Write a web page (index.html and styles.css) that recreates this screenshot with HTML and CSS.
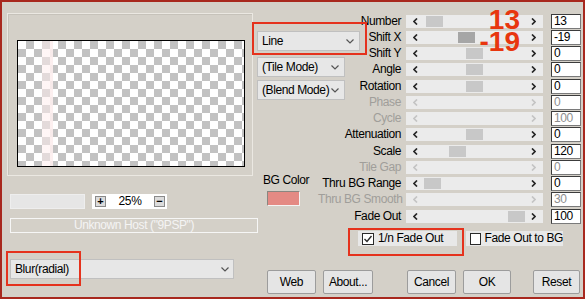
FILE: index.html
```html
<!DOCTYPE html>
<html lang="en">
<head>
  <meta charset="UTF-8">
  <title>Filter Dialog</title>
  <link rel="stylesheet" href="styles.css">
</head>
<body>
  <div class="window">
    <div class="left">
      <div class="group">
        <div class="preview"><div class="streak"></div></div>
      </div>
      <div class="zoom-row">
        <div class="zoom-field"></div>
        <div class="zoom-box">
          <span class="zbtn">+</span>
          <span class="zval">25%</span>
          <span class="zbtn">&minus;</span>
        </div>
      </div>
      <div class="host">Unknown Host ("9PSP")</div>
      <div class="select blur">Blur(radial)<svg class="chev" viewBox="0 0 8 5"><path d="M.5 .5 4 4 7.5 .5"/></svg></div>
    </div>

    <div class="right">
      <div class="top">
        <div class="mid">
          <div class="select line">Line<svg class="chev" viewBox="0 0 8 5"><path d="M.5 .5 4 4 7.5 .5"/></svg></div>
          <div class="select tile">(Tile Mode)<svg class="chev" viewBox="0 0 8 5"><path d="M.5 .5 4 4 7.5 .5"/></svg></div>
          <div class="select blend">(Blend Mode)<svg class="chev" viewBox="0 0 8 5"><path d="M.5 .5 4 4 7.5 .5"/></svg></div>
          <div class="bgcolor">
            <span>BG Color</span>
            <div class="swatch"></div>
          </div>
        </div>

        <div class="sliders">
          <span class="lbl">Number</span>
          <div class="track"><svg class="arr" viewBox="0 0 5 7"><path d="M4 .5 1 3.5 4 6.5"/></svg><b class="thumb" style="left:20px"></b><svg class="arr" viewBox="0 0 5 7"><path d="M1 .5 4 3.5 1 6.5"/></svg></div>
          <span class="val">13</span>

          <span class="lbl">Shift X</span>
          <div class="track"><svg class="arr" viewBox="0 0 5 7"><path d="M4 .5 1 3.5 4 6.5"/></svg><b class="thumb focus" style="left:52px"></b><svg class="arr" viewBox="0 0 5 7"><path d="M1 .5 4 3.5 1 6.5"/></svg></div>
          <span class="val">-19</span>

          <span class="lbl">Shift Y</span>
          <div class="track"><svg class="arr" viewBox="0 0 5 7"><path d="M4 .5 1 3.5 4 6.5"/></svg><b class="thumb" style="left:60px"></b><svg class="arr" viewBox="0 0 5 7"><path d="M1 .5 4 3.5 1 6.5"/></svg></div>
          <span class="val">0</span>

          <span class="lbl">Angle</span>
          <div class="track"><svg class="arr" viewBox="0 0 5 7"><path d="M4 .5 1 3.5 4 6.5"/></svg><b class="thumb" style="left:60px"></b><svg class="arr" viewBox="0 0 5 7"><path d="M1 .5 4 3.5 1 6.5"/></svg></div>
          <span class="val">0</span>

          <span class="lbl">Rotation</span>
          <div class="track"><svg class="arr" viewBox="0 0 5 7"><path d="M4 .5 1 3.5 4 6.5"/></svg><b class="thumb" style="left:60px"></b><svg class="arr" viewBox="0 0 5 7"><path d="M1 .5 4 3.5 1 6.5"/></svg></div>
          <span class="val">0</span>

          <span class="lbl off">Phase</span>
          <div class="track off"><svg class="arr" viewBox="0 0 5 7"><path d="M4 .5 1 3.5 4 6.5"/></svg><svg class="arr" viewBox="0 0 5 7"><path d="M1 .5 4 3.5 1 6.5"/></svg></div>
          <span class="val off">0</span>

          <span class="lbl off">Cycle</span>
          <div class="track off"><svg class="arr" viewBox="0 0 5 7"><path d="M4 .5 1 3.5 4 6.5"/></svg><svg class="arr" viewBox="0 0 5 7"><path d="M1 .5 4 3.5 1 6.5"/></svg></div>
          <span class="val off">100</span>

          <span class="lbl">Attenuation</span>
          <div class="track"><svg class="arr" viewBox="0 0 5 7"><path d="M4 .5 1 3.5 4 6.5"/></svg><b class="thumb" style="left:60px"></b><svg class="arr" viewBox="0 0 5 7"><path d="M1 .5 4 3.5 1 6.5"/></svg></div>
          <span class="val">0</span>

          <span class="lbl">Scale</span>
          <div class="track"><svg class="arr" viewBox="0 0 5 7"><path d="M4 .5 1 3.5 4 6.5"/></svg><b class="thumb" style="left:43px"></b><svg class="arr" viewBox="0 0 5 7"><path d="M1 .5 4 3.5 1 6.5"/></svg></div>
          <span class="val">120</span>

          <span class="lbl off">Tile Gap</span>
          <div class="track off"><svg class="arr" viewBox="0 0 5 7"><path d="M4 .5 1 3.5 4 6.5"/></svg><svg class="arr" viewBox="0 0 5 7"><path d="M1 .5 4 3.5 1 6.5"/></svg></div>
          <span class="val off">0</span>

          <span class="lbl">Thru BG Range</span>
          <div class="track"><svg class="arr" viewBox="0 0 5 7"><path d="M4 .5 1 3.5 4 6.5"/></svg><b class="thumb" style="left:18px"></b><svg class="arr" viewBox="0 0 5 7"><path d="M1 .5 4 3.5 1 6.5"/></svg></div>
          <span class="val">0</span>

          <span class="lbl off">Thru BG Smooth</span>
          <div class="track off"><svg class="arr" viewBox="0 0 5 7"><path d="M4 .5 1 3.5 4 6.5"/></svg><svg class="arr" viewBox="0 0 5 7"><path d="M1 .5 4 3.5 1 6.5"/></svg></div>
          <span class="val off">30</span>

          <span class="lbl">Fade Out</span>
          <div class="track"><svg class="arr" viewBox="0 0 5 7"><path d="M4 .5 1 3.5 4 6.5"/></svg><b class="thumb" style="left:102px"></b><svg class="arr" viewBox="0 0 5 7"><path d="M1 .5 4 3.5 1 6.5"/></svg></div>
          <span class="val">100</span>
        </div>
      </div>

      <div class="checks">
        <label class="check first"><span class="box"><svg viewBox="0 0 10 10"><path d="M1.5 5 4 7.5 8.5 2"/></svg></span>1/n Fade Out</label>
        <label class="check second"><span class="box"></span>Fade Out to BG</label>
      </div>

      <div class="buttons">
        <button class="web">Web</button>
        <button class="about">About...</button>
        <button class="cancel">Cancel</button>
        <button class="ok">OK</button>
        <button class="reset">Reset</button>
      </div>
    </div>

    <!-- annotation marks drawn over the dialog -->
    <div class="mark mark-line"></div>
    <div class="mark mark-blur"></div>
    <div class="mark mark-fade"></div>
    <div class="note">13<br>-19</div>
  </div>
</body>
</html>
```

FILE: styles.css
```css
body {
  margin: 0;
  font-family: "Liberation Sans", sans-serif;
  font-size: 12px;
  letter-spacing: -0.4px;
  color: #000;
}

.window {
  position: relative;
  display: flex;
  width: 585px;
  height: 299px;
  box-sizing: border-box;
  border: 2px solid #a8281e;
  background: #d4d0c8;
}

/* left side: preview and filter choice */
.left {
  width: 255px;
  flex-shrink: 0;
  display: flex;
  flex-direction: column;
}

.group {
  margin: 11px 4px 0 5px;
  height: 163px;
  box-sizing: border-box;
  padding: 26px 0 0 9px;
  border: 1px solid #ebe8e2;
  box-shadow: inset 1px 1px 0 #c6c2ba;
}

.preview {
  position: relative;
  width: 228px;
  height: 127px;
  box-sizing: border-box;
  border: 1px solid #000;
  background: repeating-conic-gradient(#c2c2c2 0 25%, #fff 0 50%) 0 0 / 16px 16px;
}

.streak {
  position: absolute;
  top: 0;
  bottom: 0;
  left: 24px;
  width: 11px;
  background: linear-gradient(to right, rgba(255, 238, 238, 0.55) 0 72%, rgba(252, 238, 238, 0.92) 72% 100%);
}

.zoom-row {
  display: flex;
  gap: 7px;
  margin: 18px 0 0 8px;
  height: 15px;
}

.zoom-field {
  width: 75px;
  box-sizing: border-box;
  background: #e6e6e6;
  border: 1px solid #eeeeee;
}

.zoom-box {
  width: 75px;
  display: flex;
  align-items: center;
  justify-content: space-between;
  padding: 0 2px 0 3px;
  box-sizing: border-box;
  background: #fff;
}

.zbtn {
  width: 11px;
  height: 11px;
  box-sizing: border-box;
  border: 1px solid #8a8a8a;
  background: #dcdcdc;
  font-weight: bold;
  font-size: 11px;
  letter-spacing: 0;
  line-height: 9px;
  text-align: center;
}

.zval {
  line-height: 13px;
}

.host {
  margin: 9px 0 0 8px;
  width: 248px;
  height: 15px;
  box-sizing: border-box;
  border: 1px solid #f6f6f6;
  color: #f4f4f4;
  line-height: 13px;
  text-align: center;
}

.select {
  display: flex;
  align-items: center;
  justify-content: space-between;
  box-sizing: border-box;
  padding: 0 5px 0 4px;
  background: #e7e7e7;
  border: 1px solid #c0c0c0;
  white-space: nowrap;
}

.chev {
  width: 8px;
  height: 5px;
  fill: none;
  stroke: #555;
  stroke-width: 1.2;
}

.blur {
  margin: 26px 0 0 8px;
  width: 224px;
  height: 20px;
  padding-right: 4px;
}

/* right side */
.right {
  flex: 1;
  display: flex;
  flex-direction: column;
}

.top {
  display: flex;
}

.mid {
  width: 61px;
  flex-shrink: 0;
  padding-top: 29px;
}

.line {
  width: 103px;
  height: 20px;
}

.tile,
.blend {
  width: 88px;
  height: 20px;
}

.tile {
  margin-top: 6px;
}

.blend {
  margin-top: 3px;
}

.bgcolor {
  margin: 74px 0 0 6px;
  line-height: 13px;
  white-space: nowrap;
}

.swatch {
  margin: 4px 0 0 4px;
  width: 33px;
  height: 15px;
  box-sizing: border-box;
  background: #e48a84;
  border: 1px solid;
  border-color: #8a8680 #f4f4f4 #f4f4f4 #8a8680;
}

.sliders {
  margin-top: 11px;
  display: grid;
  grid-template-columns: 88px 145px 30px;
  grid-auto-rows: 16.25px;
  align-items: center;
}

.lbl {
  padding-right: 5px;
  text-align: right;
  white-space: nowrap;
  line-height: 13px;
}

.lbl.off {
  color: #a09e9a;
}

.track {
  position: relative;
  width: 137px;
  height: 13px;
  display: flex;
  align-items: center;
  justify-content: space-between;
  padding: 0 7px;
  box-sizing: border-box;
  background: #ebebeb;
}

.arr {
  width: 5px;
  height: 7px;
  fill: none;
  stroke: #262626;
  stroke-width: 1.7;
}

.track.off .arr {
  stroke: #c4c4c4;
}

.thumb {
  position: absolute;
  top: 1px;
  width: 17px;
  height: 11px;
  background: #c8c8c8;
}

.thumb.focus {
  background: #a6a6a6;
}

.val {
  height: 15px;
  box-sizing: border-box;
  padding-left: 2px;
  border: 1px solid;
  border-color: #3c3c3c #7a7a7a #7a7a7a #3c3c3c;
  background: #fff;
  line-height: 13px;
}

.val.off {
  color: #8e8e8e;
}

.checks {
  display: flex;
  gap: 9px;
  margin: 7px 0 0 101px;
  height: 15px;
}

.check {
  display: flex;
  align-items: center;
  gap: 4px;
  padding-left: 4px;
  box-sizing: border-box;
  background: #e8e8e8;
  line-height: 13px;
  white-space: nowrap;
}

.check.first {
  width: 99px;
}

.check.second {
  width: 97px;
}

.box {
  width: 12px;
  height: 12px;
  box-sizing: border-box;
  border: 1px solid #2a2a2a;
  background: #fff;
}

.box svg {
  display: block;
  width: 10px;
  height: 10px;
  fill: none;
  stroke: #2a2a2a;
  stroke-width: 1.4;
}

.buttons {
  display: flex;
  margin: 24px 0 0 10px;
  height: 24px;
}

.buttons button {
  height: 24px;
  padding: 0;
  font: inherit;
  letter-spacing: inherit;
  color: #000;
  background: #e5e5e5;
  border: 1px solid #9c9c9c;
  border-radius: 2px;
}

.web { width: 49px; }
.about { width: 50px; margin-left: 7px; }
.cancel { width: 49px; margin-left: 34px; }
.ok { width: 48px; margin-left: 7px; }
.reset { width: 47px; margin-left: 22px; }

/* red annotations */
.mark {
  position: absolute;
  box-sizing: border-box;
  border: 2px solid #e5321d;
}

.mark-line {
  left: 250px;
  top: 20px;
  width: 115px;
  height: 33px;
}

.mark-blur {
  left: 4px;
  top: 249px;
  width: 75px;
  height: 35px;
}

.mark-fade {
  left: 346px;
  top: 226px;
  width: 116px;
  height: 28px;
}

.note {
  position: absolute;
  top: 7px;
  right: 63px;
  text-align: right;
  font-weight: bold;
  font-size: 28px;
  letter-spacing: 0;
  line-height: 22px;
  color: #e8360e;
}
```
